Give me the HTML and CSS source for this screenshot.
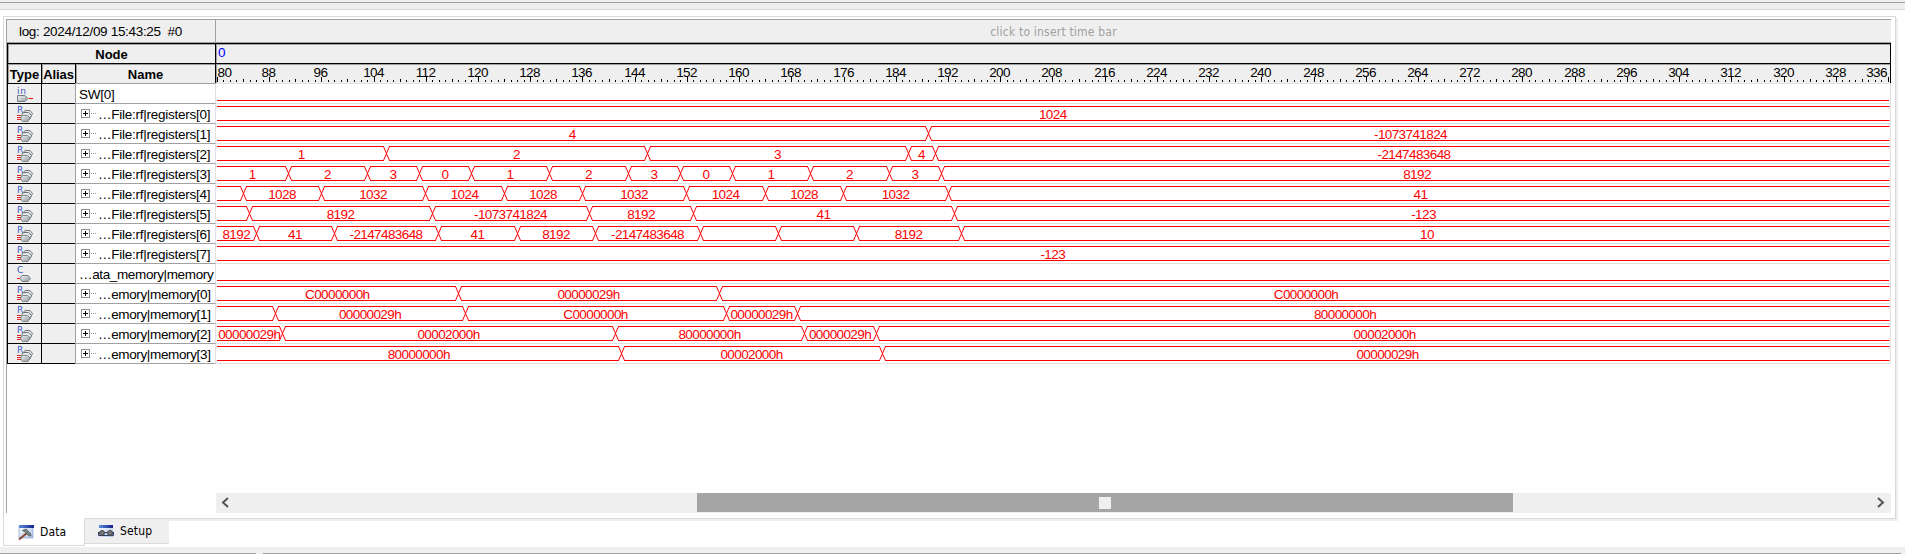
FILE: index.html
```html
<!DOCTYPE html>
<html lang="en">
<head>
<meta charset="utf-8">
<title>Signal log</title>
<link rel="stylesheet" href="styles.css">
</head>
<body>
<svg class="defs" width="0" height="0">
  <defs>
    <linearGradient id="metal" x1="0" y1="0" x2="1" y2="1">
      <stop offset="0" stop-color="#f4f7f8"/><stop offset="1" stop-color="#8d979c"/>
    </linearGradient>
    <linearGradient id="title" x1="0" y1="0" x2="1" y2="0">
      <stop offset="0" stop-color="#5c8ee0"/><stop offset="1" stop-color="#15208c"/>
    </linearGradient>
    <linearGradient id="pane" x1="0" y1="0" x2="1" y2="1">
      <stop offset="0" stop-color="#ffffff"/><stop offset="1" stop-color="#a9c0e6"/>
    </linearGradient>
    <symbol id="icon-in" viewBox="0 0 33 19">
      <text class="glyph" x="9" y="9.5" textLength="9">in</text>
      <path d="M9.5 11.5H17L20 14.5L17 17.5H9.5Z" fill="url(#metal)" stroke="#777d82"/>
      <path d="M21 14.5h4" stroke="#f00"/>
    </symbol>
    <symbol id="icon-reg" viewBox="0 0 33 19">
      <text class="glyph" x="9" y="9">R</text>
      <path d="M9 11.500h5M9 13.500h4M9 15.500h4" stroke="#e02020"/>
      <path d="M17 6.500h5l2.500 3-2 4h-6l-2-4z" fill="#dfe4e6" stroke="#70787c"/>
      <path d="M15.500 8.500h5l3 3-2 4h-6l-2.500-4z" fill="#dfe4e6" stroke="#70787c"/>
      <path d="M14.500 11.500h5l2.500 2.500-2 3.500h-5.500l-2-3z" fill="url(#metal)" stroke="#80898d"/>
    </symbol>
    <symbol id="icon-comb" viewBox="0 0 33 19">
      <text class="glyph" x="9" y="9">C</text>
      <path d="M9 14.500h3" stroke="#f00"/>
      <path d="M14 11.500h6l2.500 3-2.500 3h-6l-2-3z" fill="url(#metal)" stroke="#777d82"/>
    </symbol>
  </defs>
</svg>

<div class="top-strip"></div>
<div class="window">
  <div class="panel">
    <div class="viewer">
      <div class="log-row">
        <div class="log-name">log: 2024/12/09 15:43:25&nbsp; #0</div>
        <div class="log-hint">click to insert time bar</div>
      </div>
      <div class="head-row">
        <div class="node">Node</div>
        <div class="origin">0</div>
      </div>
      <div class="head-row">
        <div class="h-type">Type</div>
        <div class="h-alias">Alias</div>
        <div class="h-name">Name</div>
        <div class="scale"><svg id="scale" width="1674" height="19"></svg></div>
      </div>
      <div id="rows"></div>
      <div class="spacer"></div>
      <div class="scroll">
        <svg class="arrow" width="20" height="20"><path d="M12 5L7 9.500L12 14" fill="none" stroke="#555" stroke-width="2"/></svg>
        <div class="track"><div class="thumb"><span class="grip"></span></div></div>
        <svg class="arrow" width="20" height="20"><path d="M7 5L12 9.500L7 14" fill="none" stroke="#555" stroke-width="2"/></svg>
      </div>
    </div>
  </div>
  <div class="tabs">
    <div class="tab active">
      <svg width="16" height="16"><rect x="1" y="1" width="14" height="12" fill="url(#pane)" stroke="#7f9bd0" stroke-width=".6"/><rect x="1" y="0" width="15" height="3" fill="url(#title)"/><path d="M1 14.500L9 8" stroke="#8c4a3a" stroke-width="2.200"/><path d="M4.500 5.500L8 4L12.500 8.500L13 11L10.500 10.500L7.500 7Z" fill="#7b8585" stroke="#525c5c" stroke-width=".8"/></svg>
      <span>Data</span>
    </div>
    <div class="tab">
      <svg width="16" height="16"><rect x="1" y="2" width="14" height="11" fill="url(#pane)"/><rect x="1" y="1" width="14" height="3" fill="url(#title)"/><path d="M.5 8V11.500H15.500V8M6 8.500h4" fill="none" stroke="#2a3e66"/><circle cx="4" cy="9" r="2.500" fill="#777" stroke="#444"/><circle cx="12" cy="9" r="2.500" fill="#777" stroke="#444"/></svg>
      <span>Setup</span>
    </div>
  </div>
</div>
<div class="bottom-strip"><div class="seg-a"></div><div class="seg-b"></div></div>
<script src="waves.js"></script>
</body>
</html>
```
FILE: waves.js
```js
// Horizontal extent of the plot, in page pixels.
const START = 217, END = 1889.5, ORIGIN = 216;

const signals = [
  { icon: 'in', name: 'SW[0]' },
  { icon: 'reg', name: '…File:rf|registers[0]', at: [], v: ['1024'] },
  { icon: 'reg', name: '…File:rf|registers[1]', at: [928.5], v: ['4', '-1073741824'] },
  { icon: 'reg', name: '…File:rf|registers[2]', at: [386.5, 647.5, 908.5, 935.5], v: ['1', '2', '3', '4', '-2147483648'] },
  { icon: 'reg', name: '…File:rf|registers[3]', at: [288.5, 367.5, 419.5, 471.5, 549.5, 628.5, 680.5, 732.5, 810.5, 889.5, 941.5], v: ['1', '2', '3', '0', '1', '2', '3', '0', '1', '2', '3', '8192'] },
  { icon: 'reg', name: '…File:rf|registers[4]', at: [243.5, 321.5, 425.5, 504.5, 582.5, 686.5, 765.5, 843.5, 948.5], v: ['', '1028', '1032', '1024', '1028', '1032', '1024', '1028', '1032', '41'] },
  { icon: 'reg', name: '…File:rf|registers[5]', at: [249.5, 432.5, 589.5, 693.5, 954.5], v: ['', '8192', '-1073741824', '8192', '41', '-123'] },
  { icon: 'reg', name: '…File:rf|registers[6]', at: [256.5, 334.5, 438.5, 517.5, 595.5, 700.5, 778.5, 856.5, 961.5], v: ['8192', '41', '-2147483648', '41', '8192', '-2147483648', '', '', '8192', '10'] },
  { icon: 'reg', name: '…File:rf|registers[7]', at: [], v: ['-123'] },
  { icon: 'comb', name: '…ata_memory|memory' },
  { icon: 'reg', name: '…emory|memory[0]', at: [458.5, 719.5], v: ['C0000000h', '00000029h', 'C0000000h'] },
  { icon: 'reg', name: '…emory|memory[1]', at: [275.5, 465.5, 726.5, 797.5], v: ['', '00000029h', 'C0000000h', '00000029h', '80000000h'] },
  { icon: 'reg', name: '…emory|memory[2]', at: [282.5, 615.5, 804.5, 876.5], v: ['00000029h', '00002000h', '80000000h', '00000029h', '00002000h'] },
  { icon: 'reg', name: '…emory|memory[3]', at: [621.5, 882.5], v: ['80000000h', '00002000h', '00000029h'] }
];

function wave(s) {
  if (!s.at) return `<path class="bus" d="M1 16.5H${END - ORIGIN - 0.5}"/>`;
  const edges = [START, ...s.at, END];
  let bus = '', cross = '', labels = '';
  for (let i = 0; i < edges.length - 1; i++) {
    const last = i === edges.length - 2;
    const a = edges[i] - ORIGIN + (i ? 2.5 : 0);
    const b = edges[i + 1] - ORIGIN - (last ? 0 : 2.5);
    bus += `M${a} 2.5H${b}M${a} 16.5H${b}`;
    const x = (edges[i] + edges[i + 1]) / 2 - ORIGIN - 0.5 + (last && i ? 2 : 0);
    if (s.v[i]) labels += `<text x="${x}" y="15">${s.v[i]}</text>`;
  }
  for (const c of s.at.map(x => x - ORIGIN)) {
    cross += `M${c - 3} 2.5L${c + 3} 16.5M${c + 3} 2.5L${c - 3} 16.5`;
  }
  return `<path class="bus" d="${bus}"/><path class="cross" d="${cross}"/>${labels}`;
}

document.getElementById('rows').innerHTML = signals.map(s => `
  <div class="row">
    <div class="type"><svg width="33" height="19"><use href="#icon-${s.icon}"/></svg></div>
    <div class="alias"></div>
    <div class="name ${s.icon}${s.name.includes('emory') ? ' mem' : ''}">${s.icon === 'reg' ? '<i class="plus"></i><i class="dots"></i>' : ''}<span>${s.name}</span></div>
    <div class="wave"><svg width="1674" height="19">${wave(s)}</svg></div>
  </div>`).join('');

let ticks = '', nums = '';
for (let t = 80; t <= 336; t++) {
  const x = Math.floor(217.4 + (t - 80) * 6.5275) - ORIGIN + 0.5;
  const top = t % 8 === 0 ? 13 : t % 4 === 0 ? 15 : 16;
  ticks += `M${x} ${top}V18`;
  if (t % 8 === 0) {
    const dx = t === 80 ? 7 : t === 336 ? -12 : -1;
    nums += `<text x="${x + dx}" y="13">${t}</text>`;
  }
}
document.getElementById('scale').innerHTML = `<path class="tick" d="${ticks}"/>${nums}`;
```
FILE: styles.css
```css
* { box-sizing: border-box; }
body {
  margin: 0;
  height: 554px;
  overflow: hidden;
  display: flex;
  flex-direction: column;
  background: #fff;
  color: #000;
  font: 13px/19px "Liberation Sans", Arial, sans-serif;
}
svg { display: block; }
.defs { position: absolute; }
.top-strip {
  height: 10px;
  background: linear-gradient(#a0a0a0, #a0a0a0) 0 2px / 100% 1px no-repeat #efefef;
  border-bottom: 1px solid #d8d8d8;
}
.window { flex: 1; padding: 6px 7px 0 3px; display: flex; flex-direction: column; }
.panel {
  width: 1893px;
  height: 503px;
  padding: 2px 4px 0 2px;
  border: 1px solid #d9d9d9;
  box-shadow: 2px 2px 0 #efefef;
}
.viewer {
  width: 1885px;
  height: 494px;
  border-left: 1px solid #a0a0a0;
  display: flex;
  flex-direction: column;
}
.log-row { display: flex; height: 24px; flex: none; background: #efefef; border-top: 1px solid #a0a0a0; border-bottom: 1px solid #a0a0a0; }
.log-name { width: 209px; padding: 0 0 0 12px; border-right: 1px solid #a0a0a0; line-height: 23px; white-space: pre; font-size: 13.5px; letter-spacing: -.32px; }
.log-hint { flex: 1; text-align: center; color: #a0a0a0; line-height: 25px; font-family: "DejaVu Sans Condensed", "DejaVu Sans", sans-serif; font-stretch: condensed; font-size: 12px; letter-spacing: .2px; }
.head-row { display: flex; height: 20px; flex: none; border-top: 1px solid #000; border-left: 1px solid #000; border-right: 1px solid #000; background: #efefef; font-weight: bold; text-align: center; white-space: nowrap; }
.head-row > div { box-shadow: inset 1px 1px 0 #a0a0a0; height: 19px; line-height: 21px; }
.node { width: 208px; border-right: 1px solid #000; }
.head-row .origin { flex: 1; padding-left: 2px; color: #00f; text-align: left; font-weight: normal; line-height: 17px; font-size: 13.5px; }
.h-type { width: 34px; border-right: 1px solid #000; }
.h-alias { width: 34px; border-right: 1px solid #000; letter-spacing: -.1px; }
.h-name { width: 140px; border-right: 1px solid #000; }
.scale { flex: 1; overflow: hidden; font-weight: normal; }
.tick { stroke: #000; fill: none; }
svg text { font: 13.5px "Liberation Sans", Arial, sans-serif; letter-spacing: -.6px; text-anchor: middle; }
svg text.glyph { font: 9px "DejaVu Sans", sans-serif; fill: #3558c0; text-anchor: start; letter-spacing: 0; }
.row { display: flex; height: 20px; }
.type, .alias { border-top: 1px solid #000; background: #efefef; }
.type { width: 35px; border-left: 1px solid #000; border-right: 1px solid #000; }
.alias { width: 33px; }
.name { width: 141px; border-top: 1px solid #a0a0a0; border-left: 1px solid #a0a0a0; border-right: 1px solid #e0e0e0; display: flex; align-items: center; padding-left: 3px; white-space: nowrap; line-height: 21px; }
.name span { font-size: 13.5px; letter-spacing: -.25px; padding-top: 1px; }
.name.mem span { letter-spacing: -.36px; }
.name.reg { padding-left: 5px; }
.plus {
  width: 9px; height: 9px; border: 1px solid #909090;
  background: linear-gradient(#000, #000) 1px 3px / 5px 1px no-repeat, linear-gradient(#000, #000) 3px 1px / 1px 5px no-repeat;
}
.dots { width: 5px; height: 1px; margin: 0 2px 0 1px; background: repeating-linear-gradient(90deg, #999 0 1px, #fff 1px 2px); }
.wave { width: 1675px; border-top: 1px solid #e2e2e2; border-right: 1px solid #e0e0e0; }
.wave text { fill: #f00; }
.bus, .cross { fill: none; stroke: #f00; }
.row:last-child { height: 21px; }
.row:last-child > .type, .row:last-child > .alias { border-bottom: 1px solid #000; }
.row:last-child > .name { border-bottom: 1px solid #a0a0a0; }
.row:last-child > .wave { border-bottom: 1px solid #e2e2e2; }
.spacer { flex: 1; }
.scroll { display: flex; width: 1675px; height: 20px; flex: none; margin-left: 209px; background: #efefef; }
.track { flex: 1; padding-left: 461px; }
.thumb { width: 816px; height: 19px; background: #a5a5a5; display: flex; align-items: center; justify-content: center; }
.grip { width: 12px; height: 12px; background: #efefef; }
.tabs { display: flex; align-items: flex-start; margin-top: -1px; position: relative; font-family: "DejaVu Sans Condensed", "DejaVu Sans", sans-serif; font-stretch: condensed; font-size: 12px; }
.tab { width: 84px; height: 26px; padding: 1px 0 0 13px; display: flex; align-items: center; gap: 6px; background: #efefef; border-top: 1px solid #d9d9d9; border-bottom: 1px solid #d9d9d9; }
.tab span { letter-spacing: .15px; }
.tab.active { width: 82px; height: 28px; padding-left: 14px; background: #fff; border: 1px solid #d9d9d9; border-top-color: #fff; gap: 6px; }
.bottom-strip { height: 7px; flex: none; background: #efefef; display: flex; align-items: flex-end; gap: 7px; }
.seg-a { width: 256px; height: 1px; background: #a0a0a0; }
.seg-b { width: 1638px; height: 1px; background: #a0a0a0; }
```
